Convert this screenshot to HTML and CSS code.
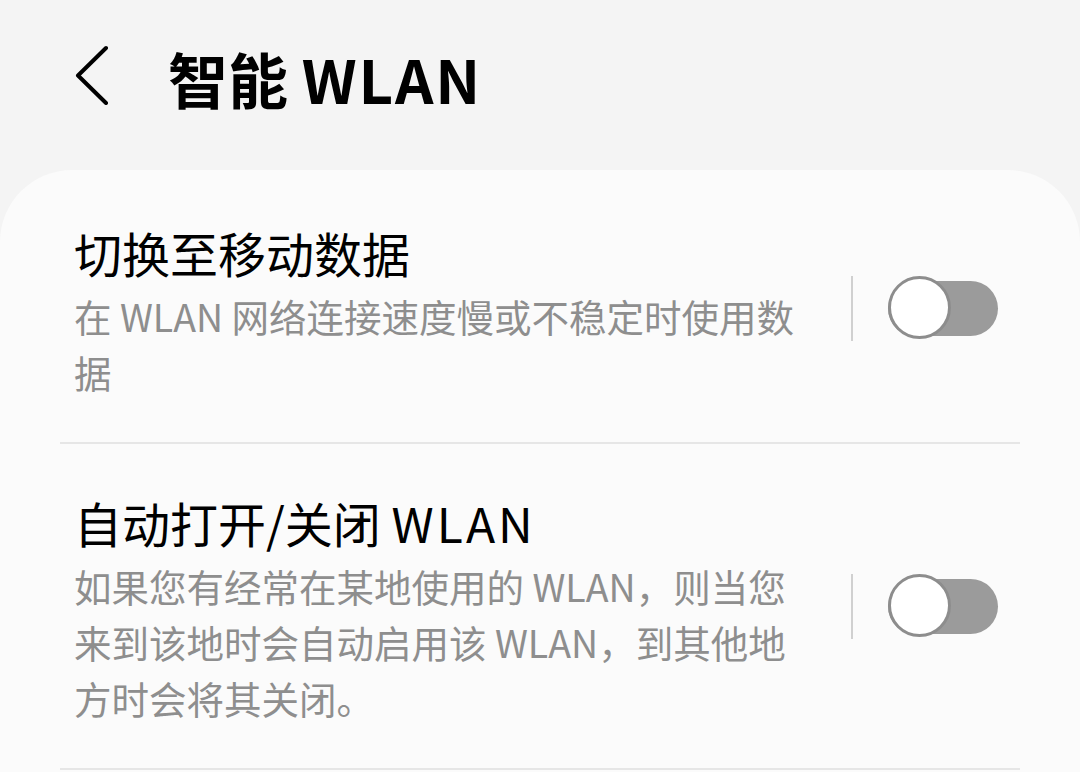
FILE: index.html
```html
<!DOCTYPE html>
<html lang="zh-CN">
<head>
<meta charset="utf-8">
<title>智能 WLAN</title>
<link rel="stylesheet" href="styles.css">
</head>
<body>
<header class="appbar">
  <button class="back" aria-label="返回">
    <svg width="36" height="60" viewBox="0 0 36 60"><path d="M32 3 L4 30.5 L32 58" fill="none" stroke="#000" stroke-width="4" stroke-linecap="round" stroke-linejoin="round"/></svg>
  </button>
  <h1 class="title">智能 <span class="latin">WLAN</span></h1>
</header>
<main class="card">
  <div class="row">
    <div class="text">
      <div class="row-title">切换至移动数据</div>
      <div class="row-sub">在 WLAN 网络连接速度慢或不稳定时使用数据</div>
    </div>
    <div class="sep"></div>
    <div class="switch"><span class="knob"></span></div>
  </div>
  <div class="row">
    <div class="text">
      <div class="row-title">自动打开/关闭 <span class="latin">WLAN</span></div>
      <div class="row-sub">如果您有经常在某地使用的 WLAN，则当您来到该地时会自动启用该 WLAN，到其他地方时会将其关闭。</div>
    </div>
    <div class="sep"></div>
    <div class="switch"><span class="knob"></span></div>
  </div>
</main>
</body>
</html>
```

FILE: styles.css
```css
html, body {
  margin: 0;
  padding: 0;
}
body {
  background: #f4f4f4;
  font-family: "Noto Sans CJK SC", "Noto Sans", sans-serif;
  color: #000;
  width: 1080px;
  height: 772px;
  overflow: hidden;
}
.appbar {
  height: 170px;
  display: flex;
  align-items: center;
  padding-left: 74px;
  box-sizing: border-box;
  padding-bottom: 14px;
}
.back {
  border: 0;
  background: none;
  padding: 0;
  width: 36px;
  height: 60px;
  display: flex;
  margin-bottom: 6px;
}
.title {
  margin: 0 0 0 58px;
  font-size: 60px;
  font-weight: 700;
  line-height: 70px;
}
.title .latin {
  letter-spacing: 2px;
}
.card {
  background: #fbfbfb;
  border-radius: 72px 72px 0 0;
  padding: 4px 60px 0;
  height: 602px;
  box-sizing: border-box;
  overflow: hidden;
}
.row {
  display: flex;
  align-items: center;
  border-bottom: 2px solid #e6e6e6;
}
.text {
  flex: 1;
  padding: 45px 44px 42px 14px;
  min-width: 0;
}
.row-title {
  font-size: 48px;
  line-height: 66px;
  font-weight: 400;
  color: #000;
}
.row-title .latin {
  letter-spacing: 3px;
}
.row-sub {
  margin-top: 3px;
  font-size: 37.5px;
  line-height: 56px;
  color: #8e8e8e;
}
.sep {
  width: 2px;
  height: 65px;
  background: #d0d0d0;
  margin-right: 35px;
  flex: none;
}
.switch {
  position: relative;
  width: 110px;
  height: 55px;
  border-radius: 28px;
  background: #9b9b9b;
  margin-right: 22px;
  flex: none;
}
.knob {
  position: absolute;
  left: 0;
  top: -5px;
  width: 57px;
  height: 57px;
  border: 3px solid #8d8d8d;
  border-radius: 50%;
  background: #fff;
}
```
